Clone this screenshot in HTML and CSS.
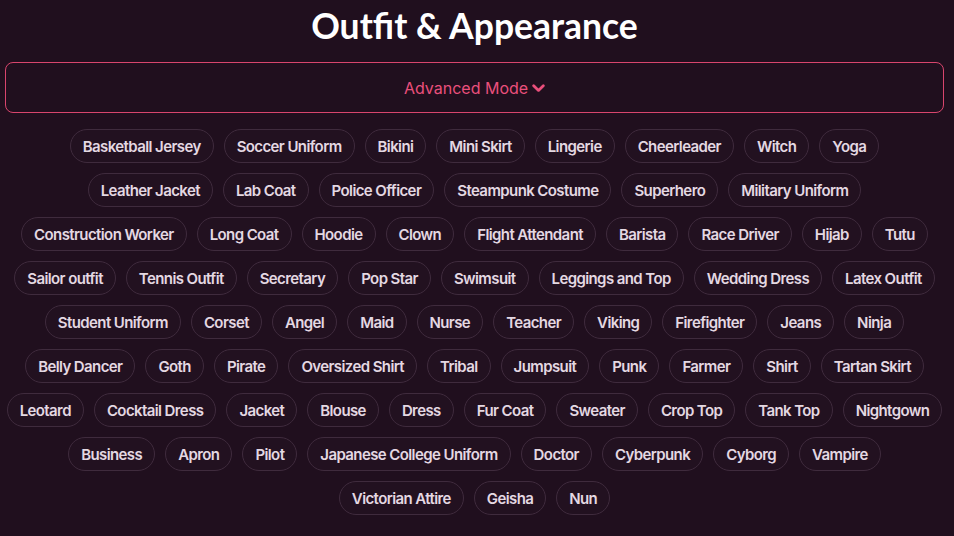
FILE: index.html
```html
<!DOCTYPE html>
<html lang="en">
<head>
<meta charset="utf-8">
<title>Outfit &amp; Appearance</title>
<link rel="stylesheet" href="styles.css">
</head>
<body>
<main class="panel">
  <h1 class="title">Outfit &amp; Appearance</h1>
  <button class="mode-toggle" type="button">
    <span>Advanced Mode</span>
    <svg class="chev" width="13" height="9" viewBox="0 0 13 9" aria-hidden="true"><path d="M1.7 1.8 L6.5 6.4 L11.3 1.8" fill="none" stroke="currentColor" stroke-width="2.8" stroke-linecap="round" stroke-linejoin="round"/></svg>
  </button>
  <div class="tags">
    <div class="tag-row">
      <span class="tag">Basketball Jersey</span>
      <span class="tag">Soccer Uniform</span>
      <span class="tag">Bikini</span>
      <span class="tag">Mini Skirt</span>
      <span class="tag">Lingerie</span>
      <span class="tag">Cheerleader</span>
      <span class="tag">Witch</span>
      <span class="tag">Yoga</span>
    </div>
    <div class="tag-row">
      <span class="tag">Leather Jacket</span>
      <span class="tag">Lab Coat</span>
      <span class="tag">Police Officer</span>
      <span class="tag">Steampunk Costume</span>
      <span class="tag">Superhero</span>
      <span class="tag">Military Uniform</span>
    </div>
    <div class="tag-row">
      <span class="tag">Construction Worker</span>
      <span class="tag">Long Coat</span>
      <span class="tag">Hoodie</span>
      <span class="tag">Clown</span>
      <span class="tag">Flight Attendant</span>
      <span class="tag">Barista</span>
      <span class="tag">Race Driver</span>
      <span class="tag">Hijab</span>
      <span class="tag">Tutu</span>
    </div>
    <div class="tag-row">
      <span class="tag">Sailor outfit</span>
      <span class="tag">Tennis Outfit</span>
      <span class="tag">Secretary</span>
      <span class="tag">Pop Star</span>
      <span class="tag">Swimsuit</span>
      <span class="tag">Leggings and Top</span>
      <span class="tag">Wedding Dress</span>
      <span class="tag">Latex Outfit</span>
    </div>
    <div class="tag-row">
      <span class="tag">Student Uniform</span>
      <span class="tag">Corset</span>
      <span class="tag">Angel</span>
      <span class="tag">Maid</span>
      <span class="tag">Nurse</span>
      <span class="tag">Teacher</span>
      <span class="tag">Viking</span>
      <span class="tag">Firefighter</span>
      <span class="tag">Jeans</span>
      <span class="tag">Ninja</span>
    </div>
    <div class="tag-row">
      <span class="tag">Belly Dancer</span>
      <span class="tag">Goth</span>
      <span class="tag">Pirate</span>
      <span class="tag">Oversized Shirt</span>
      <span class="tag">Tribal</span>
      <span class="tag">Jumpsuit</span>
      <span class="tag">Punk</span>
      <span class="tag">Farmer</span>
      <span class="tag">Shirt</span>
      <span class="tag">Tartan Skirt</span>
    </div>
    <div class="tag-row">
      <span class="tag">Leotard</span>
      <span class="tag">Cocktail Dress</span>
      <span class="tag">Jacket</span>
      <span class="tag">Blouse</span>
      <span class="tag">Dress</span>
      <span class="tag">Fur Coat</span>
      <span class="tag">Sweater</span>
      <span class="tag">Crop Top</span>
      <span class="tag">Tank Top</span>
      <span class="tag">Nightgown</span>
    </div>
    <div class="tag-row">
      <span class="tag">Business</span>
      <span class="tag">Apron</span>
      <span class="tag">Pilot</span>
      <span class="tag">Japanese College Uniform</span>
      <span class="tag">Doctor</span>
      <span class="tag">Cyberpunk</span>
      <span class="tag">Cyborg</span>
      <span class="tag">Vampire</span>
    </div>
    <div class="tag-row">
      <span class="tag">Victorian Attire</span>
      <span class="tag">Geisha</span>
      <span class="tag">Nun</span>
    </div>
  </div>
</main>
</body>
</html>
```

FILE: styles.css
```css
html, body {
  margin: 0;
  padding: 0;
  background: #200f1e;
}
body {
  font-family: "Inter", "Liberation Sans", sans-serif;
  color: #e8dde6;
}
.panel {
  padding: 0 10px 0 5px;
  display: flex;
  flex-direction: column;
}
.title {
  margin: 0;
  height: 50px;
  display: flex;
  align-items: center;
  justify-content: center;
  font-family: "Lato", "Inter", sans-serif;
  font-weight: 700;
  font-size: 35.5px;
  color: #ffffff;
}
.mode-toggle {
  margin: 12px 0 0 0;
  height: 51px;
  border: 1.5px solid #d8456d;
  border-radius: 8px;
  background: transparent;
  color: #ea4f7c;
  font-family: "Inter", "Liberation Sans", sans-serif;
  font-size: 16px;
  font-weight: 400;
  display: flex;
  align-items: center;
  justify-content: center;
  gap: 4px;
  padding: 0;
}
.chev { margin-top: 1px; }
.tags {
  margin-top: 16px;
  display: flex;
  flex-direction: column;
  gap: 10px;
}
.tag-row {
  display: flex;
  justify-content: center;
  gap: 10px;
}
.tag {
  height: 34px;
  box-sizing: border-box;
  padding: 0 12px;
  border: 1px solid #3f2b3d;
  border-radius: 17px;
  background: #221120;
  display: inline-flex;
  align-items: center;
  white-space: nowrap;
  font-size: 15px;
  font-weight: 600;
  letter-spacing: -0.6px;
  color: #e4d8e2;
}
```
